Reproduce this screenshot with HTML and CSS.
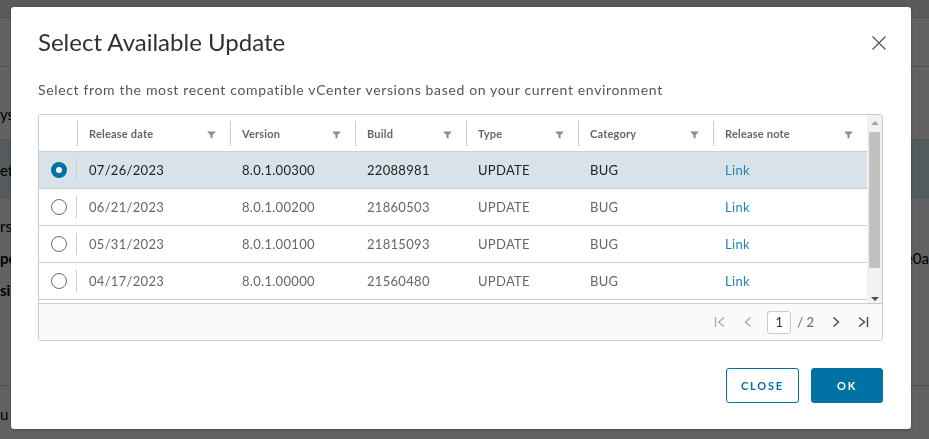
FILE: index.html
```html
<!DOCTYPE html>
<html lang="en">
<head>
<meta charset="utf-8">
<title>Select Available Update</title>
<link rel="stylesheet" href="styles.css">
</head>
<body>
<div class="page">
  <div class="page-top"></div>
  <div class="page-nav"></div>
  <div class="page-line t1">ys</div>
  <div class="page-row">et</div>
  <div class="page-line t2">rs</div>
  <div class="page-line t3"><span>po</span><span>e0a</span></div>
  <div class="page-line t4">sic</div>
  <div class="page-foot">u</div>
</div>

<div class="overlay">
  <div class="modal">
    <div class="modal-header">
      <h1 class="modal-title">Select Available Update</h1>
      <button class="close-x" aria-label="Close">
        <svg width="16" height="16" viewBox="0 0 16 16"><path d="M1.5 1.5 L14.5 14.5 M14.5 1.5 L1.5 14.5" stroke="#4f5b62" stroke-width="1.4" fill="none"/></svg>
      </button>
    </div>
    <p class="desc">Select from the most recent compatible vCenter versions based on your current environment</p>

    <div class="grid">
      <div class="grid-main">
        <div class="grid-table">
          <div class="row head">
            <div class="cell sel"></div>
            <div class="cell hc">Release date<svg class="filter" viewBox="0 0 10 9"><path d="M0 0.5 H10 L6.2 4.5 V8.6 L3.8 7.4 V4.5 Z"/></svg></div>
            <div class="cell hc">Version<svg class="filter" viewBox="0 0 10 9"><path d="M0 0.5 H10 L6.2 4.5 V8.6 L3.8 7.4 V4.5 Z"/></svg></div>
            <div class="cell hc">Build<svg class="filter" viewBox="0 0 10 9"><path d="M0 0.5 H10 L6.2 4.5 V8.6 L3.8 7.4 V4.5 Z"/></svg></div>
            <div class="cell hc">Type<svg class="filter" viewBox="0 0 10 9"><path d="M0 0.5 H10 L6.2 4.5 V8.6 L3.8 7.4 V4.5 Z"/></svg></div>
            <div class="cell hc">Category<svg class="filter" viewBox="0 0 10 9"><path d="M0 0.5 H10 L6.2 4.5 V8.6 L3.8 7.4 V4.5 Z"/></svg></div>
            <div class="cell hc">Release note<svg class="filter" viewBox="0 0 10 9"><path d="M0 0.5 H10 L6.2 4.5 V8.6 L3.8 7.4 V4.5 Z"/></svg></div>
          </div>
          <div class="body">
            <div class="row selected">
              <div class="cell sel"><span class="radio on"></span></div>
              <div class="cell">07/26/2023</div>
              <div class="cell">8.0.1.00300</div>
              <div class="cell">22088981</div>
              <div class="cell">UPDATE</div>
              <div class="cell">BUG</div>
              <div class="cell"><a class="link">Link</a></div>
            </div>
            <div class="row">
              <div class="cell sel"><span class="radio"></span></div>
              <div class="cell">06/21/2023</div>
              <div class="cell">8.0.1.00200</div>
              <div class="cell">21860503</div>
              <div class="cell">UPDATE</div>
              <div class="cell">BUG</div>
              <div class="cell"><a class="link">Link</a></div>
            </div>
            <div class="row">
              <div class="cell sel"><span class="radio"></span></div>
              <div class="cell">05/31/2023</div>
              <div class="cell">8.0.1.00100</div>
              <div class="cell">21815093</div>
              <div class="cell">UPDATE</div>
              <div class="cell">BUG</div>
              <div class="cell"><a class="link">Link</a></div>
            </div>
            <div class="row">
              <div class="cell sel"><span class="radio"></span></div>
              <div class="cell">04/17/2023</div>
              <div class="cell">8.0.1.00000</div>
              <div class="cell">21560480</div>
              <div class="cell">UPDATE</div>
              <div class="cell">BUG</div>
              <div class="cell"><a class="link">Link</a></div>
            </div>
          </div>
        </div>
        <div class="scrollbar">
          <span class="sb-arrow up"></span>
          <span class="sb-thumb"></span>
          <span class="sb-arrow down"></span>
        </div>
      </div>
      <div class="grid-footer">
        <div class="pager">
          <svg class="pg dis first" viewBox="0 0 14 14"><path d="M2.5 2 V12 M11 2.5 L5.5 7 L11 11.5" fill="none" stroke-width="1.3"/></svg>
          <svg class="pg dis" viewBox="0 0 14 14"><path d="M9.5 2.5 L4.5 7 L9.5 11.5" fill="none" stroke-width="1.3"/></svg>
          <span class="pg-input">1</span>
          <span class="pg-total">/ 2</span>
          <svg class="pg act" viewBox="0 0 14 14"><path d="M4.5 2.5 L9.5 7 L4.5 11.5" fill="none" stroke-width="1.5"/></svg>
          <svg class="pg act" viewBox="0 0 14 14"><path d="M3 2.5 L8.5 7 L3 11.5 M11.5 2 V12" fill="none" stroke-width="1.5"/></svg>
        </div>
      </div>
    </div>

    <div class="modal-footer">
      <button class="btn btn-outline">CLOSE</button>
      <button class="btn btn-primary">OK</button>
    </div>
  </div>
</div>
</body>
</html>
```

FILE: styles.css
```css
* { box-sizing: border-box; }

html, body {
  margin: 0;
  padding: 0;
  width: 929px;
  height: 439px;
  overflow: hidden;
}

body {
  background: #ffffff;
  font-family: "Lato", "Noto Sans", sans-serif;
  color: #333;
}

/* page behind the backdrop */
.page {
  display: flex;
  flex-direction: column;
  height: 439px;
  font-size: 15px;
  color: #000;
}
.page-top { height: 18px; background: #eaeaea; border-bottom: 1px solid #cfcfcf; }
.page-nav { height: 49px; border-bottom: 1px solid #d0d0d0; }
.page-line { height: 30px; line-height: 30px; }
.t1 { margin-top: 32px; height: 40px; line-height: 30px; }
.page-row { height: 60px; background: #d8ecf4; line-height: 60px; border-top: 1px solid #cfdde3; }
.t2 { margin-top: 12px; }
.t3 { display: flex; justify-content: space-between; margin-top: 2px; font-weight: 700; }
.t3 span:last-child { font-weight: 400; }
.t4 { margin-top: 2px; font-weight: 700; }
.page-foot { margin-top: auto; height: 54px; border-top: 1px solid #cfcfcf; line-height: 56px; }

.overlay {
  position: fixed;
  inset: 0;
  background: rgba(0, 0, 0, 0.615);
  padding: 7px 18px 10px 11px;
}

.modal {
  width: 900px;
  height: 422px;
  background: #fff;
  border-radius: 3px;
  box-shadow: 0 1px 3px rgba(0,0,0,0.3);
  padding: 19px 28px 0 27px;
  display: flex;
  flex-direction: column;
}

.modal-header {
  display: flex;
  justify-content: space-between;
  align-items: flex-start;
  height: 32px;
}
.modal-title {
  margin: 0;
  font-size: 24px;
  line-height: 32px;
  font-weight: 400;
  color: #313131;
  letter-spacing: 0;
}
.close-x {
  border: 0;
  background: none;
  padding: 0;
  margin: 9px -4px 0 0;
  width: 16px;
  height: 16px;
  display: flex;
}

.desc {
  margin: 22px 0 14px;
  font-size: 14px;
  line-height: 20px;
  color: #565656;
  letter-spacing: 0.65px;
}

.grid {
  width: 845px;
  height: 227px;
  border: 1px solid #cccccc;
  border-radius: 3px;
  display: flex;
  flex-direction: column;
  overflow: hidden;
}

.grid-main {
  display: flex;
  height: 189px;
  border-bottom: 1px solid #cccccc;
}
.grid-table {
  width: 828px;
  display: flex;
  flex-direction: column;
  overflow: hidden;
}
.row {
  display: grid;
  grid-template-columns: 38px 153px 125px 111px 112px 135px 154px;
  height: 37px;
  border-bottom: 1px solid #cccccc;
  flex: none;
}
.row.head { height: 37px; background: #fff; }
.body { flex: 1; overflow: hidden; }
.cell {
  position: relative;
  display: flex;
  align-items: center;
  padding-left: 12px;
  font-size: 13px;
  color: #666;
  letter-spacing: 0.3px;
}
.row.selected { background: #d8e3e9; }
.row.selected .cell { color: #222; }

.cell.sel {
  padding-left: 0;
  justify-content: center;
}
.body .cell.sel::after {
  content: "";
  position: absolute;
  right: 0;
  top: 7px;
  bottom: 7px;
  width: 1px;
  background: #cccccc;
}

.hc {
  font-size: 11px;
  font-weight: 700;
  color: #666;
  padding-right: 14px;
  justify-content: space-between;
  letter-spacing: 0.2px;
}
.hc::before {
  content: "";
  position: absolute;
  left: 0;
  top: 6px;
  bottom: 5px;
  width: 1px;
  background: #cccccc;
}
.filter {
  width: 9px;
  height: 8px;
  fill: #8c8c8c;
  margin-top: 3px;
}

.radio {
  width: 16px;
  height: 16px;
  border-radius: 50%;
  border: 1px solid #6b6b6b;
  background: #fff;
  margin-left: 2px;
}
.radio.on {
  border: 5.5px solid #0072a3;
  background: #fff;
}

.link { color: #1f83b8; text-decoration: none; }

.scrollbar {
  width: 15px;
  background: #f1f1f1;
  display: flex;
  flex-direction: column;
  align-items: center;
  padding-top: 3px;
}
.sb-arrow {
  width: 0;
  height: 0;
  border-left: 4px solid transparent;
  border-right: 4px solid transparent;
}
.sb-arrow.up { border-bottom: 4px solid #a3a3a3; margin-top: 3px; }
.sb-arrow.down { border-top: 4px solid #505050; margin-top: 29px; }
.sb-thumb {
  width: 11px;
  height: 136px;
  background: #c1c1c1;
  margin-top: 7px;
}

.grid-footer {
  flex: 1;
  background: #fafafa;
  display: flex;
  justify-content: flex-end;
  align-items: center;
  padding-right: 12px;
}
.pager {
  display: flex;
  align-items: center;
}
.pg {
  width: 14px;
  height: 14px;
}
.pg.dis { stroke: #a8a8a8; margin-right: 12px; }
.pg.dis.first { margin-right: 14px; }
.pg.act { stroke: #4d4d4d; margin-left: 13px; }
.pg-input {
  width: 24px;
  height: 23px;
  border: 1px solid #cccccc;
  border-radius: 3px;
  background: #fff;
  font-size: 13px;
  color: #333;
  display: flex;
  align-items: center;
  justify-content: center;
}
.pg-total {
  font-size: 13px;
  color: #666;
  margin-left: 6px;
  margin-right: 2px;
}

.modal-footer {
  display: flex;
  justify-content: flex-end;
  gap: 12px;
  margin-top: 27px;
}
.btn {
  height: 35px;
  border-radius: 3px;
  font-family: "Lato", "Noto Sans", sans-serif;
  font-size: 11px;
  font-weight: 700;
  letter-spacing: 1.8px;
  padding: 0;
  cursor: pointer;
}
.btn-outline {
  width: 73px;
  background: #fff;
  border: 1px solid #0072a3;
  color: #0072a3;
}
.btn-primary {
  width: 72px;
  background: #0072a3;
  border: 1px solid #0072a3;
  color: #fff;
}
```
